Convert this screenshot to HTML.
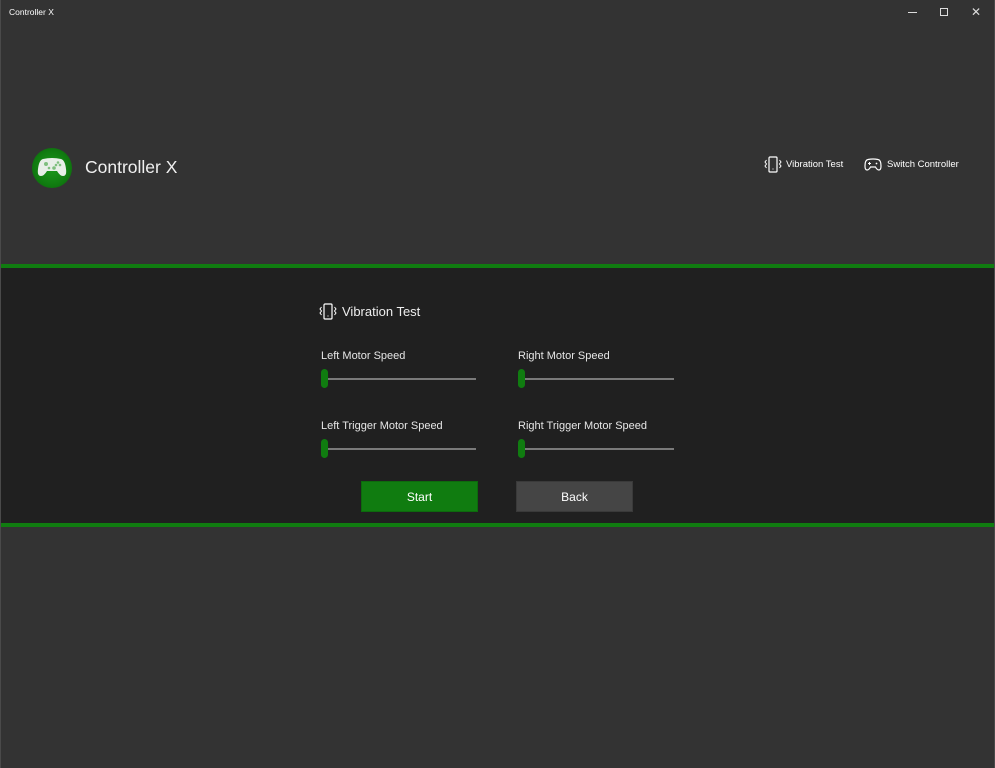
<!DOCTYPE html>
<html><head><meta charset="utf-8">
<style>
*{margin:0;padding:0;box-sizing:border-box}
html,body{width:995px;height:768px;overflow:hidden;background:#333333;font-family:"Liberation Sans",sans-serif;color:#fff}
.abs{position:absolute}
.border{left:0;top:0;width:1px;height:768px;background:#4a4a4a}
.rborder{right:0;top:0;width:1px;height:768px;background:#4a4a4a}
.tt{left:9px;top:7px;font-size:8.5px;color:#fff}
.band{left:1px;top:268px;width:993px;height:255px;background:#202020}
.gl{left:1px;width:993px;height:4px;background:#107c10}
.lbl{font-size:11px;color:#e6e6e6}
.track{height:2px;background:#7a7a7a}
.thumb{width:7px;height:19px;background:#107c10;border-radius:4px}
.btn{width:117px;height:31px;font-size:12px;display:flex;align-items:center;justify-content:center}
</style></head><body>
<div class="abs border"></div><div class="abs rborder"></div>
<div class="abs tt">Controller X</div>
<div class="abs" style="left:908px;top:12px;width:9px;height:1px;background:#ddd"></div>
<div class="abs" style="left:940px;top:8px;width:8px;height:8px;border:1px solid #ddd"></div>
<div class="abs" style="left:971px;top:6px;font-size:12px;color:#ddd;line-height:12px">✕</div>

<div class="abs" style="left:32px;top:148px;width:40px;height:40px;border-radius:50%;background:radial-gradient(circle,#1c9a1c 0%,#107c10 60%,#0b5f0b 100%)"></div>
<svg class="abs" style="left:37px;top:156px" width="30" height="22" viewBox="0 0 30 22">
<path d="M6 3 Q15 1 24 3 Q28 4 29 13 Q30 20 26 20 Q23 20 20 15 L10 15 Q7 20 4 20 Q0 20 1 13 Q2 4 6 3Z" fill="#e8efe8"/>
<circle cx="9" cy="8" r="2" fill="#7fbf7f"/><circle cx="21" cy="6.5" r="1.3" fill="#7fbf7f"/><circle cx="23" cy="9" r="1.3" fill="#7fbf7f"/><circle cx="19" cy="9" r="1.3" fill="#7fbf7f"/><circle cx="17" cy="12" r="1.8" fill="#7fbf7f"/><circle cx="12" cy="12" r="1.3" fill="#7fbf7f"/>
</svg>
<div class="abs" style="left:85px;top:157px;font-size:17.5px;color:#f0f0f0">Controller X</div>

<svg class="abs" style="left:764px;top:156px" width="18" height="17" viewBox="0 0 18 17">
<rect x="5" y="1" width="8" height="15" rx="1" fill="none" stroke="#fff" stroke-width="1.2"/>
<line x1="8.5" y1="13" x2="9.5" y2="13" stroke="#fff"/>
<path d="M2.5 4 L1 6 L2.5 8 L1 10 L2.5 12 M15.5 4 L17 6 L15.5 8 L17 10 L15.5 12" fill="none" stroke="#fff" stroke-width="1"/>
</svg>
<div class="abs" style="left:786px;top:159px;font-size:9.5px">Vibration Test</div>
<svg class="abs" style="left:864px;top:158px" width="18" height="13" viewBox="0 0 18 13">
<path d="M4 1.5 Q9 0.5 14 1.5 Q17 2 17 8 Q17 12 15 12 Q13 12 11.5 9 L6.5 9 Q5 12 3 12 Q1 12 1 8 Q1 2 4 1.5Z" fill="none" stroke="#fff" stroke-width="1.2"/>
<line x1="4" y1="5.5" x2="7" y2="5.5" stroke="#fff"/><line x1="5.5" y1="4" x2="5.5" y2="7" stroke="#fff"/>
<circle cx="12.5" cy="5.5" r="0.9" fill="#fff"/>
</svg>
<div class="abs" style="left:887px;top:159px;font-size:9.5px">Switch Controller</div>

<div class="abs gl" style="top:264px"></div>
<div class="abs band"></div>
<div class="abs gl" style="top:523px"></div>

<svg class="abs" style="left:319px;top:303px" width="18" height="17" viewBox="0 0 18 17">
<rect x="5" y="1" width="8" height="15" rx="1" fill="none" stroke="#fff" stroke-width="1.2"/>
<line x1="8.5" y1="13" x2="9.5" y2="13" stroke="#fff"/>
<path d="M2.5 4 L1 6 L2.5 8 L1 10 L2.5 12 M15.5 4 L17 6 L15.5 8 L17 10 L15.5 12" fill="none" stroke="#fff" stroke-width="1"/>
</svg>
<div class="abs" style="left:342px;top:304px;font-size:13px;color:#eee">Vibration Test</div>

<div class="abs lbl" style="left:321px;top:350px">Left Motor Speed</div>
<div class="abs track" style="left:324px;top:378px;width:152px"></div>
<div class="abs thumb" style="left:321px;top:369px"></div>

<div class="abs lbl" style="left:518px;top:350px">Right Motor Speed</div>
<div class="abs track" style="left:521px;top:378px;width:153px"></div>
<div class="abs thumb" style="left:518px;top:369px"></div>

<div class="abs lbl" style="left:321px;top:420px">Left Trigger Motor Speed</div>
<div class="abs track" style="left:324px;top:448px;width:152px"></div>
<div class="abs thumb" style="left:321px;top:439px"></div>

<div class="abs lbl" style="left:518px;top:420px">Right Trigger Motor Speed</div>
<div class="abs track" style="left:521px;top:448px;width:153px"></div>
<div class="abs thumb" style="left:518px;top:439px"></div>

<div class="abs btn" style="left:361px;top:481px;background:#107c10;border:1px solid #0d6a0d">Start</div>
<div class="abs btn" style="left:516px;top:481px;background:#454545;border:1px solid #3a3a3a">Back</div>
</body></html>
